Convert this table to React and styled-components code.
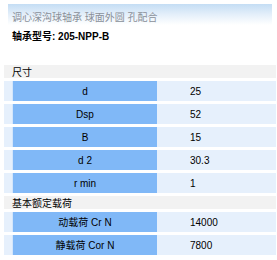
import React from 'react';
import styled, { createGlobalStyle } from 'styled-components';

const GlobalStyle = createGlobalStyle`
  body {
    margin: 0;
    background: #ffffff;
    font-family: "Liberation Sans", "Noto Sans CJK SC", sans-serif;
  }
`

const Page = styled.div`
  width: 277px;
  height: 260px;
  padding: 4px 1px 0 4px;
  box-sizing: border-box;
  overflow: hidden;
`

const Header = styled.div`
  margin: 0 4px 0 4px;
  height: 21px;
  background: linear-gradient(to bottom, #c4ddf4 0%, #e4effa 50%, #ffffff 100%);
  padding-left: 4px;
  box-sizing: border-box;
`

const Title = styled.div`
  font-size: 10px;
  color: #8a9099;
  line-height: 12px;
  padding-top: 8px;
  white-space: nowrap;
`

const Model = styled.div`
  font-size: 10px;
  font-weight: bold;
  color: #000;
  line-height: 12px;
  padding: 6px 0 0 8px;
`

const Table = styled.div`
  margin-top: 22px;
  width: 272px;
  display: flex;
  flex-direction: column;
  gap: 3px;
`

const Group = styled.div`
  height: 13px;
  background: #f2f2f2;
  font-size: 10px;
  line-height: 13px;
  padding-left: 8px;
  padding-top: 1px;
  box-sizing: border-box;
  color: #000;
`

const Row = styled.div`
  height: 20px;
  display: flex;
  background: #e6f0fc;
  font-size: 10px;
  color: #000;
`

const Label = styled.div`
  margin-left: 8px;
  width: 145px;
  background: #80b8f7;
  border-left: 1px solid #d4e6fb;
  box-sizing: border-box;
  display: flex;
  align-items: flex-end;
  justify-content: center;
  padding-bottom: 3px;
  line-height: 12px;
`

const Value = styled.div`
  flex: 1;
  display: flex;
  align-items: flex-end;
  padding-left: 33px;
  padding-bottom: 3px;
  line-height: 12px;
`

const groups = [
  {
    name: '尺寸',
    rows: [
      ['d', '25'],
      ['Dsp', '52'],
      ['B', '15'],
      ['d 2', '30.3'],
      ['r min', '1'],
    ],
  },
  {
    name: '基本额定载荷',
    rows: [
      ['动载荷 Cr N', '14000'],
      ['静载荷 Cor N', '7800'],
    ],
  },
]

function App() {
  return (
    <Page>
      <GlobalStyle />
      <Header>
        <Title>调心深沟球轴承 球面外圆 孔配合</Title>
      </Header>
      <Model>轴承型号: 205-NPP-B</Model>
      <Table>
        {groups.map((g) => (
          <React.Fragment key={g.name}>
            <Group>{g.name}</Group>
            {g.rows.map(([label, value]) => (
              <Row key={label}>
                <Label>{label}</Label>
                <Value>{value}</Value>
              </Row>
            ))}
          </React.Fragment>
        ))}
      </Table>
    </Page>
  );
}

export default App;
